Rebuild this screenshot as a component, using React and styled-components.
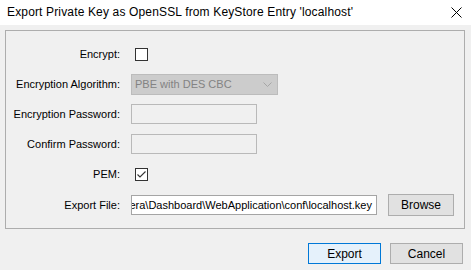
import styled, { createGlobalStyle } from 'styled-components';

const GlobalStyle = createGlobalStyle`
  html, body {
    margin: 0;
    padding: 0;
    background: #f0f0f0;
  }
  body {
    font-family: "Liberation Sans", Arial, sans-serif;
    font-size: 11px;
    color: #000;
  }
`;

const Window = styled.div`
  width: 471px;
  height: 270px;
  background: #f0f0f0;
  display: flex;
  flex-direction: column;
  overflow: hidden;
`;

const TitleBar = styled.div`
  height: 24px;
  background: #fff;
  display: flex;
  align-items: center;
  justify-content: space-between;
  padding: 0 9px 1px 7px;
  font-size: 12px;
  letter-spacing: 0.15px;
  flex-shrink: 0;
`;

const CloseIcon = styled.svg`
  width: 11px;
  height: 11px;
  margin-top: 1px;
`;

const Panel = styled.div`
  margin: 5px 6px 0 5px;
  height: 199px;
  box-sizing: border-box;
  border: 1px solid #adadad;
  padding-top: 13px;
  display: grid;
  grid-template-columns: 114px 1fr;
  grid-auto-rows: 20px;
  column-gap: 11px;
  row-gap: 10px;
  align-items: center;
`;

const Label = styled.div`
  text-align: right;
  white-space: nowrap;
  margin-top: ${p => p.$shift || 0}px;
`;

const Field = styled.div`
  display: flex;
  align-items: center;
  gap: 11px;
  min-width: 0;
  margin-top: ${p => p.$shift || 0}px;
`;

const Check = styled.div`
  width: 11px;
  height: 11px;
  margin-left: 4px;
  border: 1px solid #333;
  background: #fff;
  display: flex;
`;

const Combo = styled.div`
  width: 147px;
  height: 21px;
  box-sizing: border-box;
  border: 1px solid #bcbcbc;
  background: #cccccc;
  color: #838383;
  display: flex;
  align-items: center;
  justify-content: space-between;
  padding: 0 5px 0 3px;
`;

const TextBox = styled.div`
  width: ${p => p.$width}px;
  height: 20px;
  box-sizing: border-box;
  border: 1px solid ${p => (p.$disabled ? '#b9b9b9' : '#a5a5a5')};
  background: ${p => (p.$disabled ? '#f0f0f0' : '#fff')};
  display: flex;
  align-items: center;
  justify-content: flex-end;
  overflow: hidden;
  white-space: nowrap;
  padding-right: 4px;
`;

const Button = styled.div`
  width: 73px;
  height: 21px;
  box-sizing: border-box;
  border: 1px solid ${p => (p.$primary ? '#0078d7' : '#adadad')};
  background: ${p => (p.$primary ? '#e5f1fb' : '#e1e1e1')};
  display: flex;
  align-items: center;
  justify-content: center;
  font-size: 12px;
`;

const BrowseButton = styled(Button)`
  width: 66px;
  height: 22px;
`;

const Footer = styled.div`
  display: flex;
  justify-content: flex-end;
  gap: 9px;
  padding: 14px 8px 0 0;
`;

const App = () => {
  return (
    <Window>
      <GlobalStyle />
      <TitleBar>
        <span>Export Private Key as OpenSSL from KeyStore Entry 'localhost'</span>
        <CloseIcon viewBox="0 0 11 11">
          <path d="M0.5 0.5 L10.5 10.5 M10.5 0.5 L0.5 10.5" stroke="#000" strokeWidth="1" fill="none" />
        </CloseIcon>
      </TitleBar>
      <Panel>
        <Label>Encrypt:</Label>
        <Field>
          <Check />
        </Field>
        <Label>Encryption Algorithm:</Label>
        <Field>
          <Combo>
            <span>PBE with DES CBC</span>
            <svg width="9" height="5" viewBox="0 0 9 5">
              <path d="M0.5 0.5 L4.5 4.5 L8.5 0.5" stroke="#a6a6a6" fill="none" />
            </svg>
          </Combo>
        </Field>
        <Label>Encryption Password:</Label>
        <Field>
          <TextBox $width={126} $disabled />
        </Field>
        <Label>Confirm Password:</Label>
        <Field>
          <TextBox $width={126} $disabled />
        </Field>
        <Label>PEM:</Label>
        <Field>
          <Check>
            <svg width="11" height="11" viewBox="0 0 11 11">
              <path d="M1.5 5.5 L4 8 L9.5 2.5" stroke="#333" strokeWidth="1.1" fill="none" />
            </svg>
          </Check>
        </Field>
        <Label $shift={2}>Export File:</Label>
        <Field $shift={2}>
          <TextBox $width={246}>era\Dashboard\WebApplication\conf\localhost.key</TextBox>
          <BrowseButton>Browse</BrowseButton>
        </Field>
      </Panel>
      <Footer>
        <Button $primary>Export</Button>
        <Button>Cancel</Button>
      </Footer>
    </Window>
  );
};

export default App;
